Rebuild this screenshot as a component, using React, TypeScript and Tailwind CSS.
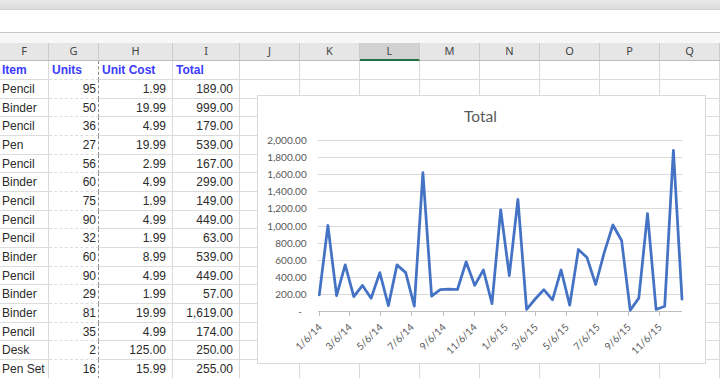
import React from "react";

const colW = [
  "w-[49px]",
  "w-[50px]",
  "w-[74px]",
  "w-[67px]",
  "w-[60px]",
  "w-[60px]",
  "w-[60px]",
  "w-[60px]",
  "w-[60px]",
  "w-[60px]",
  "w-[60px]",
  "w-[60px]",
];
const letters = ["F", "G", "H", "I", "J", "K", "L", "M", "N", "O", "P", "Q"];

const rows: [string, string, string, string][] = [
  ["Pencil", "95", "1.99", "189.00"],
  ["Binder", "50", "19.99", "999.00"],
  ["Pencil", "36", "4.99", "179.00"],
  ["Pen", "27", "19.99", "539.00"],
  ["Pencil", "56", "2.99", "167.00"],
  ["Binder", "60", "4.99", "299.00"],
  ["Pencil", "75", "1.99", "149.00"],
  ["Pencil", "90", "4.99", "449.00"],
  ["Pencil", "32", "1.99", "63.00"],
  ["Binder", "60", "8.99", "539.00"],
  ["Pencil", "90", "4.99", "449.00"],
  ["Binder", "29", "1.99", "57.00"],
  ["Binder", "81", "19.99", "1,619.00"],
  ["Pencil", "35", "4.99", "174.00"],
  ["Desk", "2", "125.00", "250.00"],
  ["Pen Set", "16", "15.99", "255.00"],
];

const totals = [
  189.05, 999.5, 179.64, 539.73, 167.44, 299.4, 149.25, 449.1, 63.68, 539.4,
  449.1, 57.71, 1619.19, 174.65, 250, 255.84, 251.72, 575.36, 299.85, 479.04,
  86.43, 1183.26, 413.54, 1305, 19.96, 139.93, 249.5, 131.34, 479.04, 68.37,
  719.2, 625, 309.38, 686.95, 1005.9, 825, 9.03, 151.24, 1139.43, 18.06,
  54.89, 1879.06, 139.72,
];

const xOf = (d: number) => 61.3 + d * 0.508;
const yOf = (v: number) => 215 - v * 0.0855;

const ticks: [number, string][] = [
  [0, "1/6/14"],
  [59, "3/6/14"],
  [120, "5/6/14"],
  [181, "7/6/14"],
  [243, "9/6/14"],
  [304, "11/6/14"],
  [365, "1/6/15"],
  [424, "3/6/15"],
  [485, "5/6/15"],
  [546, "7/6/15"],
  [608, "9/6/15"],
  [669, "11/6/15"],
];

const yLabels = [
  "2,000.00",
  "1,800.00",
  "1,600.00",
  "1,400.00",
  "1,200.00",
  "1,000.00",
  "800.00",
  "600.00",
  "400.00",
  "200.00",
];

function Chart() {
  const pts = totals
    .map((v, i) => `${xOf(i * 17).toFixed(1)},${yOf(v).toFixed(1)}`)
    .join(" ");
  return (
    <div className="absolute left-[257px] top-[95px] w-[449px] h-[269px] bg-white border border-[#d9d9d9]">
      <svg width="447" height="267" className="block font-['Lato',sans-serif]">
        <text x="222.5" y="25.7" textAnchor="middle" fontSize="15.5" fill="#595959">
          Total
        </text>
        {yLabels.map((l, k) => {
          const y = Math.round(215 - (10 - k) * 17.1) + 0.5;
          return (
            <g key={l}>
              <line x1="60" x2="424" y1={y} y2={y} stroke="#d9d9d9" strokeWidth="1" />
              <text x="48.7" y={y + 3.5} textAnchor="end" fontSize="10" fill="#595959">
                {l}
              </text>
            </g>
          );
        })}
        <line x1="60" x2="424" y1="215.5" y2="215.5" stroke="#bfbfbf" strokeWidth="1" />
        <text x="44" y="219" textAnchor="end" fontSize="10" fill="#595959">
          -
        </text>
        {ticks.map(([d, l]) => {
          const x = Math.round(xOf(d)) + 0.5;
          return (
            <g key={l}>
              <line x1={x} x2={x} y1="215.5" y2="220" stroke="#bfbfbf" strokeWidth="1" />
              <text
                x={x + 3}
                y="232"
                textAnchor="end"
                fontSize="10"
                fill="#595959"
                transform={`rotate(-45 ${x + 3} 232)`}
              >
                {l}
              </text>
            </g>
          );
        })}
        <polyline
          points={pts}
          fill="none"
          stroke="#4472c4"
          strokeWidth="2.75"
          strokeLinejoin="round"
          strokeLinecap="round"
        />
      </svg>
    </div>
  );
}

export default function App() {
  const rowH = (i: number) => (i % 3 === 2 ? "h-[18px]" : "h-[19px]");
  return (
    <div className="relative w-[720px] h-[378px] overflow-hidden bg-white font-['Liberation_Sans',Arial,sans-serif]">
      <div className="h-[10px] bg-linear-to-b from-[#e9e9e9] to-[#dcdcdc] border-b border-[#d0d0d0]" />
      <div className="h-[23px] bg-white border-b border-[#c8c8c8]" />
      <div className="h-[10px] bg-[#f7f7f7]" />
      <div className="flex h-[18px]">
        {letters.map((l, i) => (
          <div
            key={l}
            className={`${colW[i]} shrink-0 h-[18px] flex items-center justify-center border-r border-r-[#cccccc] font-['Noto_Sans',sans-serif] text-[11px] text-[#444444] ${
              l === "L"
                ? "bg-[#d2d2d2] border-b-2 border-b-[#217346]"
                : "bg-[#e6e6e6] border-b border-b-[#bdbdbd]"
            }`}
          >
            {l}
          </div>
        ))}
      </div>
      {[["Item", "Units", "Unit Cost", "Total"] as [string, string, string, string], ...rows].map(
        (r, ri) => {
          const head = ri === 0;
          return (
            <div key={ri} className={`flex ${rowH(ri)}`}>
              {letters.map((l, ci) => {
                let content: string = "";
                let align = "";
                if (ci < 4) content = r[ci];
                if (head) {
                  align = ci === 0 ? "pl-[2px]" : "pl-[3px]";
                } else if (ci === 0) align = "pl-[2px]";
                else if (ci === 1) align = "justify-end pr-[2px]";
                else if (ci < 4) align = "justify-end pr-[6px]";
                const rb =
                  ci === 1
                    ? "border-r border-dashed border-r-[#8c8c8c]"
                    : "border-r border-r-[#d9d9d9]";
                return (
                  <div
                    key={l}
                    className={`${colW[ci]} shrink-0 flex items-center border-b border-b-[#dcdcdc] ${rb} ${align} text-[12px] leading-none whitespace-nowrap ${
                      head ? "font-bold text-[#3b3bff]" : "text-[#2b2b2b]"
                    }`}
                  >
                    {content}
                  </div>
                );
              })}
            </div>
          );
        }
      )}
      <Chart />
    </div>
  );
}
